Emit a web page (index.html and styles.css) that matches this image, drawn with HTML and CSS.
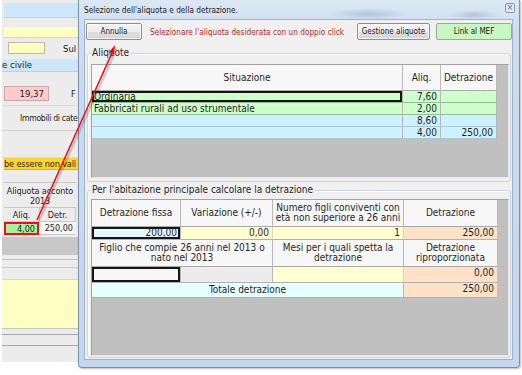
FILE: index.html
```html
<!DOCTYPE html>
<html lang="it">
<head>
<meta charset="utf-8">
<title>Selezione aliquota</title>
<link rel="stylesheet" href="styles.css">
</head>
<body>
<div class="screen">
  <div class="form">
    <div class="band blue b1"></div>
    <div class="band yellow b2"></div>
    <div class="row r-input"><span class="input-box"></span><span class="lbl-sul">Sul</span></div>
    <div class="band blue b3">e civile</div>
    <div class="row r-pink"><span class="pink-box">19,37</span><span class="lbl-f">F</span></div>
    <div class="row r-immobili">Immobili di cate</div>
    <div class="row r-empty"></div>
    <div class="band orange">be essere non vali</div>
    <div class="mini-table">
      <div class="mt-head">Aliquota acconto<br>2013</div>
      <div class="mt-sub"><span>Aliq.</span><span>Detr.</span></div>
      <div class="mt-vals"><span class="mt-aliq">4,00</span><span class="mt-detr">250,00</span></div>
    </div>
    <div class="band gray"></div>
    <div class="row r-line1"></div>
    <div class="row r-line2"></div>
    <div class="band lyellow"></div>
    <div class="row r-line3"></div>
    <div class="row r-line4"></div>
  </div>

  <div class="dialog">
    <div class="titlebar">
      <span class="title">Selezione dell'aliquota e della detrazione.</span>
      <span class="close">&#215;</span>
    </div>
    <div class="client">
      <div class="toolbar">
        <button class="btn btn-annulla">Annulla</button>
        <span class="hint">Selezionare l'aliquota desiderata con un doppio click</span>
        <button class="btn btn-gestione">Gestione aliquote</button>
        <button class="btn btn-mef">Link al MEF</button>
      </div>

      <div class="group group1">
        <span class="group-label">Aliquote</span>
        <div class="grid grid1">
          <div class="hd">Situazione</div>
          <div class="hd">Aliq.</div>
          <div class="hd">Detrazione</div>

          <div class="c green sel">Ordinaria</div>
          <div class="c green num">7,60</div>
          <div class="c green num"></div>

          <div class="c green">Fabbricati rurali ad uso strumentale</div>
          <div class="c green num">2,00</div>
          <div class="c green num"></div>

          <div class="c blue"></div>
          <div class="c blue num">8,60</div>
          <div class="c blue num"></div>

          <div class="c blue"></div>
          <div class="c blue num">4,00</div>
          <div class="c blue num">250,00</div>
        </div>
      </div>

      <div class="group group2">
        <span class="group-label">Per l'abitazione principale calcolare la detrazione</span>
        <div class="grid grid2">
          <div class="hd">Detrazione fissa</div>
          <div class="hd">Variazione (+/-)</div>
          <div class="hd two">Numero figli conviventi con<br>età non superiore a 26 anni</div>
          <div class="hd">Detrazione</div>

          <div class="c lblue num sel">200,00</div>
          <div class="c yel num">0,00</div>
          <div class="c yel num">1</div>
          <div class="c peach num">250,00</div>

          <div class="hd two span2">Figlio che compie 26 anni nel 2013 o<br>nato nel 2013</div>
          <div class="hd two">Mesi per i quali spetta la<br>detrazione</div>
          <div class="hd two">Detrazione<br>riproporzionata</div>

          <div class="c white sel"></div>
          <div class="c lgray"></div>
          <div class="c yel"></div>
          <div class="c peach num">0,00</div>

          <div class="c cyan center span3">Totale detrazione</div>
          <div class="c peach num">250,00</div>
        </div>
      </div>
    </div>
  </div>

  <svg class="arrow" width="522" height="375" viewBox="0 0 522 375">
    <line x1="39" y1="221" x2="114" y2="55" stroke="#000" stroke-opacity="0.18" stroke-width="2"/>
    <line x1="37" y1="220" x2="112" y2="53" stroke="#e3121b" stroke-width="1.6"/>
    <polygon points="115,45 114.3,54.6 108.8,52.2" fill="#e3121b"/>
  </svg>
</div>
</body>
</html>
```

FILE: styles.css
```css
* { box-sizing: border-box; }

html, body {
  margin: 0;
  padding: 0;
  background: #ffffff;
}

body {
  font-family: "DejaVu Sans Condensed", "DejaVu Sans", sans-serif;
  font-size: 10px;
  color: #1e1e1e;
}

.screen {
  position: relative;
  width: 522px;
  height: 375px;
  overflow: hidden;
  background: #ffffff;
}

/* ---------- background form ---------- */
.form {
  width: 120px;
  height: 362px;
  margin-left: 2px;
  padding-top: 3px;
  background: #ececec;
  display: flex;
  flex-direction: column;
  font-size: 9px;
  white-space: nowrap;
}

.band { flex: none; margin-left: 2px; }
.band.blue { background: #cde6f8; border-bottom: 1px solid #b7d2e6; }
.band.yellow { background: #ffffc2; border-bottom: 1px solid #dadab0; }
.b1 { height: 15px; }
.b2 { height: 11px; margin-top: 9px; }
.b3 { height: 13px; margin-top: 5px; margin-left: 0; padding-left: 0; line-height: 12px; font-size: 9.5px; }

.row { flex: none; display: flex; align-items: center; }

.r-input { height: 12px; margin-top: 4px; }
.input-box {
  width: 37px; height: 12px; margin-left: 6px;
  background: #ffffc2; border: 1px solid #b9b9a5;
}
.lbl-sul { margin-left: 18px; font-size: 9.5px; }

.r-pink { height: 15px; margin-top: 14px; }
.pink-box {
  width: 45px; height: 15px; margin-left: 2px;
  background: #ffcaca; border: 1px solid #c9a9a9;
  text-align: right; padding-right: 4px; line-height: 13px; font-size: 9.5px;
}
.lbl-f { margin-left: 22px; }

.r-immobili {
  height: 26px; margin-top: 4px; padding-left: 18px;
  border-top: 1px solid #d9d9d9; border-bottom: 1px solid #d0d0d0;
  font-size: 8.6px;
  letter-spacing: -0.3px;
}
.r-empty { height: 27px; border-bottom: 1px solid #dcdcdc; }

.band.orange {
  height: 12px; background: #ffd42b; line-height: 12px; padding-left: 0;
  border-bottom: 1px solid #e0b400; letter-spacing: -0.1px;
}

.mini-table { flex: none; margin-top: 12px; margin-left: 2px; width: 72px; }
.mt-head {
  height: 26px; text-align: center; line-height: 10px; padding-top: 3px;
  border-top: 1px solid #c8c8c8; border-bottom: 1px solid #c8c8c8;
  letter-spacing: -0.1px;
}
.mt-sub, .mt-vals { display: flex; }
.mt-sub span {
  width: 36px; height: 14px; text-align: center; line-height: 14px;
  border-right: 1px solid #c8c8c8; border-bottom: 1px solid #c8c8c8;
}
.mt-vals span { height: 13px; line-height: 10px; text-align: right; padding-right: 2px; }
.mt-aliq { width: 35px; background: #a9ef9f; border: 2px solid #e3121b; }
.mt-detr { width: 36px; background: #f6f6f6; border-bottom: 1px solid #c8c8c8; line-height: 12px !important; }

.band.gray { height: 18px; margin-top: 2px; background: #c8c8c8; margin-left: 0; }
.r-line1 { height: 5px; border-bottom: 1px solid #c0c0c0; }
.r-line2 { height: 8px; border-bottom: 1px solid #c8c8c8; }
.band.lyellow { height: 50px; margin-top: 11px; background: #ffffc5; margin-left: 0;
  border-top: 1px solid #d8d8c0; border-bottom: 1px solid #c8c8b0; }
.r-line3 { height: 6px; border-bottom: 1px solid #a8a8a8; }
.r-line4 { height: 11px; border-bottom: 1px solid #a8a8a8; }

/* ---------- dialog window ---------- */
.dialog {
  position: absolute;
  left: 78px;
  top: 0;
  width: 442px;
  height: 368px;
  display: flex;
  flex-direction: column;
  padding: 0 6px 7px 5px;
  border: 1px solid #7990b0;
  border-top: none;
  border-radius: 0 0 4px 4px;
  background:
    radial-gradient(ellipse 40px 6px at 290px 14px, rgba(120,140,170,0.35), transparent),
    radial-gradient(ellipse 25px 5px at 395px 15px, rgba(120,140,170,0.35), transparent),
    linear-gradient(180deg, #dce8f5 0%, #cddcef 30px, #c5d7ed 100%);
  box-shadow: 1px 1px 2px rgba(0,0,0,0.25);
}

.titlebar {
  height: 19px;
  flex: none;
  display: flex;
  align-items: center;
  justify-content: space-between;
}
.title { font-size: 8.2px; color: #1a1a1a; }
.close {
  width: 10px; height: 10px; margin-right: -2px; margin-top: -3px;
  border: 1px solid #8196b4; border-radius: 2px;
  background: #e4ecf6;
  font-size: 9px; line-height: 7px; text-align: center; color: #506a8c;
}

.client {
  flex: 1;
  background: #f0f0f0;
  border: 1px solid #9fb2cb;
  display: flex;
  flex-direction: column;
}

.toolbar {
  flex: none;
  display: flex;
  align-items: center;
  padding-top: 3px;
  height: 20px;
}
.btn {
  font-family: inherit;
  font-size: 8px;
  color: #1a1a1a;
  height: 17px;
  padding: 0;
  border: 1px solid #8e8f8f;
  border-radius: 2px;
  background: linear-gradient(180deg, #f5f5f5 0%, #ececec 50%, #dfdfdf 51%, #d6d6d6 100%);
  box-shadow: inset 0 0 0 1px rgba(255,255,255,0.7);
  white-space: nowrap;
}
.btn-annulla { width: 56px; margin-left: 1px; }
.hint { margin-left: 8px; font-size: 8.2px; color: #b02a2a; white-space: nowrap; }
.btn-gestione { width: 73px; margin-left: auto; }
.btn-mef {
  width: 76px; margin-left: 6px;
  background: #c9f7c4;
  border-color: #9aa89a;
  box-shadow: none;
}

.group {
  position: relative;
  flex: none;
  margin: 0 1px 0 2px;
  border: 1px solid #cdd4da;
  border-radius: 3px;
  box-shadow: inset 1px 1px 0 #ffffff;
}
.group-label {
  position: absolute;
  top: -7px;
  left: 3px;
  padding: 0 1px;
  background: #f0f0f0;
  font-size: 10px;
  line-height: 12px;
  color: #1e1e1e;
}
.group1 { margin-top: 13px; height: 129px; padding: 10px 1px 3px 3px; }
.group2 { margin-top: 8px; height: 168px; padding: 8px 1px 1px 3px; }

.grid {
  display: grid;
  height: 100%;
  background: #c0c0c0;
  border-top: 1px solid #a3a3a3;
  border-left: 1px solid #a3a3a3;
  border-right: 1px solid #e6e6e6;
  border-bottom: 1px solid #e6e6e6;
  align-content: start;
}
.grid1 {
  grid-template-columns: 311px 38px 56px;
  grid-template-rows: 26px repeat(4, 12px);
}
.grid2 {
  grid-template-columns: 89px 92px 131px 94px;
  grid-template-rows: 27px 13px 27px 16px 15px;
}

.hd {
  background: #f7f7f7;
  border-right: 1px solid #b9b9b9;
  border-bottom: 1px solid #a9a9a9;
  display: flex;
  align-items: center;
  justify-content: center;
  text-align: center;
  line-height: 10px;
  color: #262626;
}
.c {
  border-right: 1px solid #b7b7b7;
  border-bottom: 1px solid #b0b0b0;
  line-height: 11px;
  padding: 0 2px;
  white-space: nowrap;
  overflow: hidden;
}
.num { text-align: right; padding-right: 3px; }
.center { text-align: center; line-height: 14px; }
.green { background: #ccffc9; border-bottom-color: #9ab89a; }
.blue { background: #cdf2ff; border-bottom-color: #a9c8d4; }
.lblue { background: #e3f7ff; }
.yel { background: #ffffd2; border-right-color: #d8d8b0; }
.peach { background: #fde2c8; border-right-color: #cfbfae; line-height: 14px; }
.white { background: #f7f7f7; }
.lgray { background: #ececec; }
.cyan { background: #e6ffff; }
.sel { box-shadow: inset 0 0 0 2px #151515; }
.grid2 .c.num { line-height: 12px; }
.span2 { grid-column: span 2; }
.span3 { grid-column: span 3; }

.arrow {
  position: absolute;
  left: 0;
  top: 0;
  pointer-events: none;
}
```
